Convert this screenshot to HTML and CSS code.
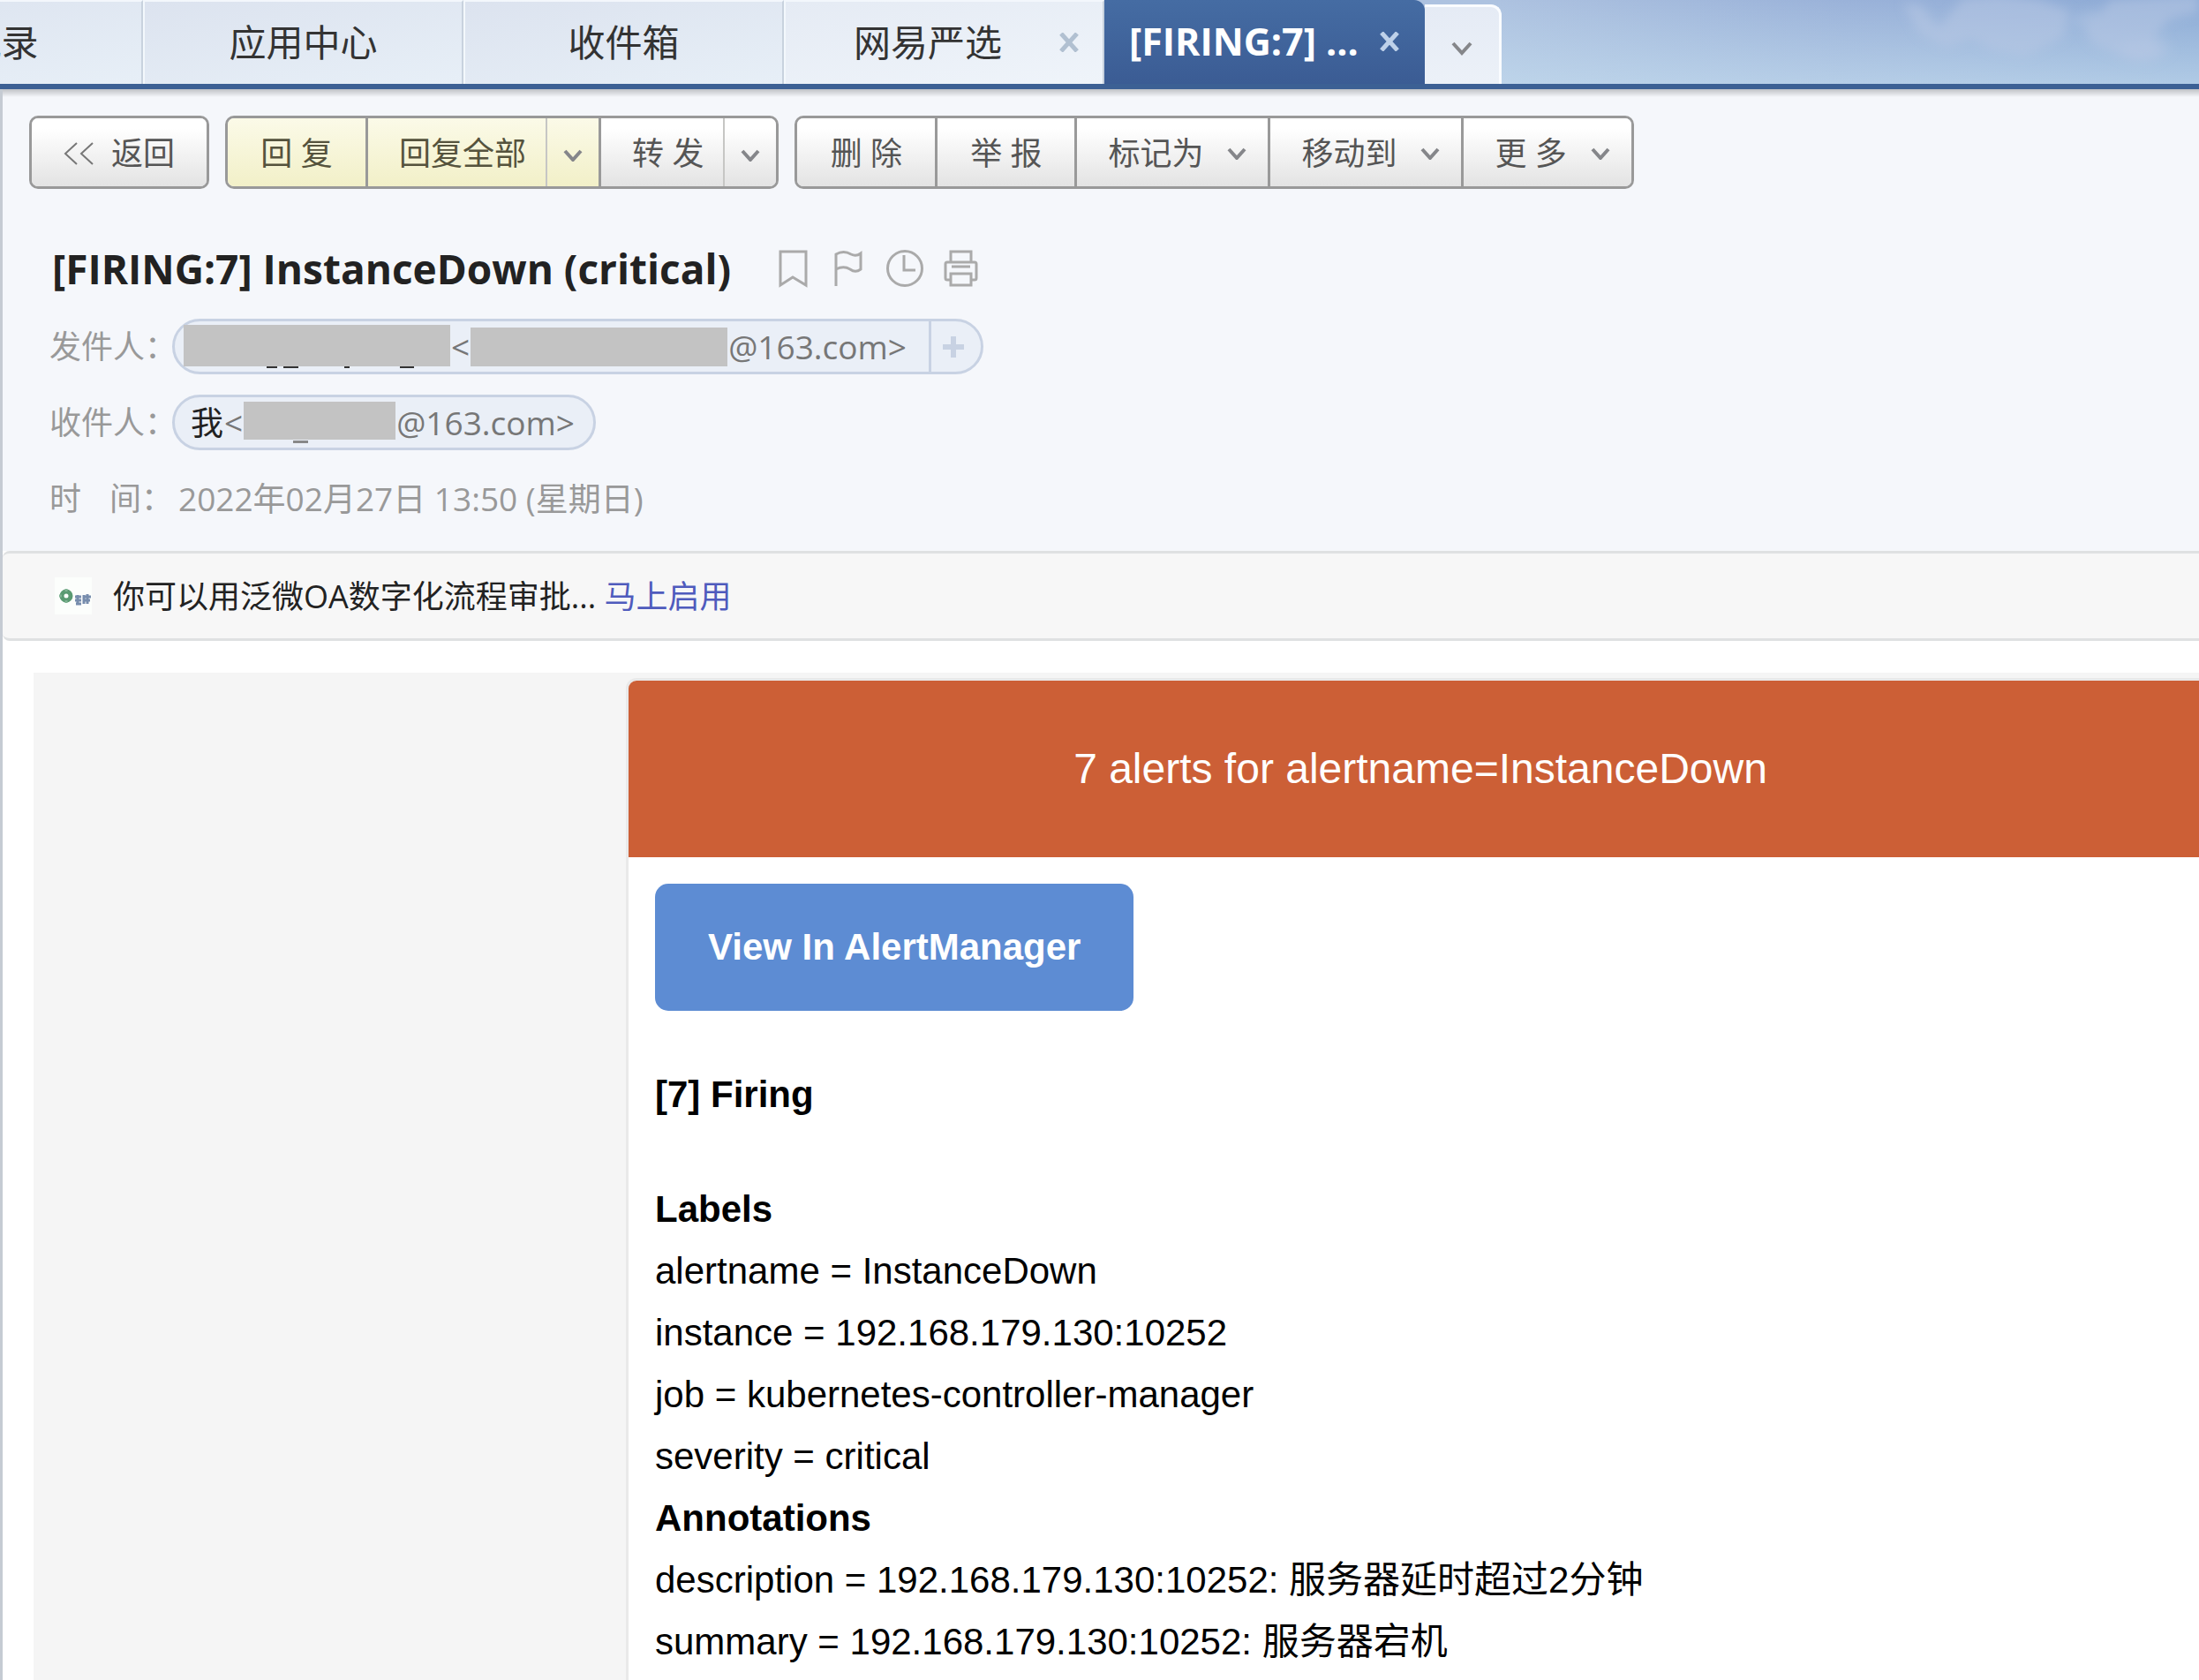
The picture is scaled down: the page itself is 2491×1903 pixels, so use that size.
FILE: index.html
```html
<!DOCTYPE html>
<html lang="zh-CN">
<head>
<meta charset="utf-8">
<title>[FIRING:7] InstanceDown (critical)</title>
<link rel="stylesheet" href="styles.css">
</head>
<body>
<header class="topbar">
  <svg class="sky" viewBox="0 0 560 95" aria-hidden="true">
    <defs><filter id="soft" x="-20%" y="-40%" width="140%" height="180%"><feGaussianBlur stdDeviation="6"/></filter></defs>
    <g filter="url(#soft)" fill="#b7c7e3">
      <path opacity=".55" d="M225 4l20 2 20 26 28-34 40-4 46 6 34 12-6 30-44 22-40-8-20-12-30 10-30-16z"/>
      <path opacity=".55" d="M430 34l30-34 100-8v22l-34 8-18 22 10 18-30 8-30-12-18-8z"/>
      <path opacity=".4" d="M420 18l26-8-6 20-24-2zM470 50l50-8 8 16-24 14-34-8z"/>
    </g>
  </svg>
  <nav class="tabs">
    <a class="tab" href="#"><span class="tab-label">通讯录</span></a>
    <a class="tab" href="#"><span class="tab-label">应用中心</span></a>
    <a class="tab" href="#"><span class="tab-label">收件箱</span></a>
    <div class="tab closable"><a class="tab-label" href="#">网易严选</a>
      <button class="close" aria-label="关闭"><svg width="22" height="22" viewBox="0 0 22 22"><path d="M2 1l18 20M20 1L2 21"/></svg></button></div>
    <div class="tab active"><a class="tab-label" href="#">[FIRING:7] ...</a>
      <button class="close" aria-label="关闭"><svg width="22" height="22" viewBox="0 0 22 22"><path d="M2 1l18 20M20 1L2 21"/></svg></button></div>
    <button class="tab-more" aria-label="更多标签"><svg class="chev" width="24" height="16" viewBox="0 0 24 16"><path d="M2 2l10 11L22 2"/></svg></button>
  </nav>
</header>

<main class="mail">
  <section class="mail-head">
    <div class="toolbar">
      <div class="group"><button class="btn back"><svg width="34" height="26" viewBox="0 0 34 26"><path d="M15 1L2 13l13 12M33 1L20 13l13 12"/></svg>返回</button></div>
      <div class="group">
        <button class="btn short yellow">回 复</button>
        <button class="btn split yellow">回复全部</button>
        <button class="btn arrow yellow" aria-label="回复全部选项"><svg class="chev" width="22" height="14" viewBox="0 0 22 14"><path d="M2 2l9 10 9-10"/></svg></button>
        <button class="btn split">转 发</button>
        <button class="btn arrow" aria-label="转发选项"><svg class="chev" width="22" height="14" viewBox="0 0 22 14"><path d="M2 2l9 10 9-10"/></svg></button>
      </div>
      <div class="group">
        <button class="btn short">删 除</button>
        <button class="btn short">举 报</button>
        <button class="btn menu">标记为<svg class="chev" width="22" height="14" viewBox="0 0 22 14"><path d="M2 2l9 10 9-10"/></svg></button>
        <button class="btn menu">移动到<svg class="chev" width="22" height="14" viewBox="0 0 22 14"><path d="M2 2l9 10 9-10"/></svg></button>
        <button class="btn menu">更 多<svg class="chev" width="22" height="14" viewBox="0 0 22 14"><path d="M2 2l9 10 9-10"/></svg></button>
      </div>
    </div>

    <div class="title-row">
      <h1>[FIRING:7] InstanceDown (critical)</h1>
      <div class="marks">
        <button aria-label="书签"><svg width="42" height="44" viewBox="0 0 42 44"><path d="M6 3h29v38L20 32 6 41z"/></svg></button>
        <button aria-label="旗标"><svg width="42" height="44" viewBox="0 0 42 44"><path d="M6 42V6c7-4 12-3 17 0 4 2 7 2 11-1v18c-4 3-8 3-12 0-5-3-10-3-16 0"/></svg></button>
        <button aria-label="稍后处理"><svg width="42" height="44" viewBox="0 0 42 44"><circle cx="21" cy="22" r="19.500"/><path d="M20 7v17h13"/></svg></button>
        <button aria-label="打印"><svg width="42" height="44" viewBox="0 0 42 44"><path d="M10 15V3h23v12M10 35H6q-2 0-2-2V17q0-2 2-2h31q2 0 2 2v16q0 2-2 2h-4M11 20h21M10 28h23v13H10z"/></svg></button>
      </div>
    </div>

    <div class="fields">
      <div class="field"><span class="label">发件人：</span>
        <span class="pill from">
          <svg class="mask" width="302" height="49" viewBox="0 0 302 49"><path d="M0 0h302v47H0z"/><path class="ink" d="M94 47h12v2H94zM113 47h17v2h-17zM182 47h6v2h-6zM245 47h16v2h-16z"/></svg>
          <span>&lt;</span>
          <svg class="mask" width="291" height="44" viewBox="0 0 291 44"><path d="M0 0h291v44H0z"/></svg>
          <span>@163.com&gt;</span>
          <button class="add" aria-label="添加联系人"><svg width="26" height="26" viewBox="0 0 26 26"><path d="M13 1v24M1 13h24"/></svg></button>
        </span>
      </div>
      <div class="field"><span class="label">收件人：</span>
        <span class="pill to"><span class="name">我</span><span>&lt;</span>
          <svg class="mask" width="172" height="47" viewBox="0 0 172 47"><path d="M0 0h172v43H0z"/><path class="under" d="M56 44h17v3H56z"/></svg>
          <span>@163.com&gt;</span></span>
      </div>
      <div class="field"><span class="label spread"><span>时</span><span>间：</span></span><span class="date">2022年02月27日 13:50 (星期日)</span></div>
    </div>
  </section>

  <aside class="notice">
    <svg width="42" height="42" viewBox="0 0 42 42" aria-hidden="true"><path fill="#fcfefc" d="M0 0h42v42H0z"/><circle cx="13" cy="21" r="5" fill="none" stroke="#5a9a72" stroke-width="5"/><path d="M13 13v3M13 26v3M5 21h3" stroke="#7fb292" stroke-width="3"/><path d="M23 22h7M23 26h7M24 30h6M26 20v10M33 20v10M32 22h9M34 26h6M37 19v11" stroke="#56719a" stroke-width="3" opacity=".8"/></svg>
    <p>你可以用泛微OA数字化流程审批... <a href="#">马上启用</a></p>
  </aside>

  <section class="mail-body">
    <article class="card">
      <h2>7 alerts for alertname=InstanceDown</h2>
      <div class="content">
        <a class="view" href="#">View In AlertManager</a>
        <p class="firing"><b>[7] Firing</b></p>
        <p><b>Labels</b><br>
          alertname = InstanceDown<br>
          instance = 192.168.179.130:10252<br>
          job = kubernetes-controller-manager<br>
          severity = critical<br>
          <b>Annotations</b><br>
          description = 192.168.179.130:10252: 服务器延时超过2分钟<br>
          summary = 192.168.179.130:10252: 服务器宕机</p>
      </div>
    </article>
  </section>
</main>
</body>
</html>
```
FILE: styles.css
```css
* { box-sizing: border-box; }
body {
  margin: 0;
  overflow: hidden;
  background: #fff;
  color: #222;
  font: 36px/48px "Open Sans", "Noto Sans CJK SC", sans-serif;
}
h1, h2, p { margin: 0; }
a { color: inherit; text-decoration: none; }
button {
  margin: 0;
  padding: 0;
  border: 0;
  background: none;
  color: inherit;
  font: inherit;
  cursor: pointer;
}
svg { display: block; flex: none; }

/* Top bar */
.topbar {
  position: relative;
  z-index: 1;
  overflow: hidden;
  border-bottom: 6px solid #3c6094;
  background:
    linear-gradient(to bottom, rgba(200, 224, 240, 0), rgba(200, 224, 240, .6)),
    linear-gradient(to right, #adc2e0 68%, #9ab2d9 84%, #8caad5);
}
.sky { position: absolute; top: 0; right: 0; width: 560px; height: 95px; }
.tabs { position: relative; display: flex; align-items: flex-end; height: 95px; margin-left: -201px; }
.tab {
  display: flex;
  align-items: center;
  flex: 0 0 363px;
  height: 95px;
  padding-bottom: 2px;
  border-top: 2px solid #f3f7fc;
  border-left: 2px solid #f3f8fc;
  border-right: 2px solid #c8d2de;
  background: linear-gradient(170deg, #dce3ef, #e7eff7);
  color: #333;
  font-size: 42px;
}
.tab-label { flex: 1; text-align: center; white-space: nowrap; }
.closable { padding-left: 16px; padding-right: 27px; background: linear-gradient(170deg, #e5ebf4, #eff4fa); }
.close { width: 22px; margin-left: 4px; }
.close svg { fill: none; stroke: #b1c0d1; stroke-width: 5; }
.active {
  padding: 0 29px 2px 28px;
  border: 0;
  border-radius: 0 12px 0 0;
  background: linear-gradient(#456ca3, #3b5c94);
  color: #fff;
  font-size: 43px;
  font-weight: 700;
}
.active .tab-label { text-align: left; }
.active .close { margin-left: 0; }
.active .close svg { stroke: #bed1e9; }
.tab-more {
  display: flex;
  align-items: center;
  justify-content: center;
  width: 87px;
  height: 90px;
  padding-top: 6px;
  border-top: 3px solid #fafcff;
  border-right: 3px solid #fafcff;
  border-radius: 0 12px 0 0;
  background: linear-gradient(#e5ebf5, #ecf1f8);
}
.chev { fill: none; stroke: #85868a; stroke-width: 4; }

/* Message head */
.mail { border-left: 3px solid #c5cbd3; }
.mail-head {
  padding: 30px 30px 28px;
  background: linear-gradient(#bfc1c5, #f5f7fb 9px);
}
.toolbar { display: flex; gap: 18px; }
.group {
  display: flex;
  height: 83px;
  border: 3px solid #999;
  border-radius: 10px;
  overflow: hidden;
}
.btn {
  display: flex;
  align-items: center;
  justify-content: center;
  padding-top: 2px;
  background: linear-gradient(#fff 15%, #e3e3e3);
  color: #555;
  white-space: nowrap;
}
.btn + .btn { border-left: 3px solid #999; }
.btn.yellow { background: linear-gradient(#fbfae8, #f2f0c8); color: #55533d; }
.back { gap: 20px; padding: 2px 36px 0; }
.back svg { fill: none; stroke: #777; stroke-width: 2; }
.short { width: 156px; }
.btn + .short { width: 158px; }
.split { padding: 2px 22px 0 35px; }
.btn + .arrow { width: 60px; padding-top: 6px; border-left: 2px solid #c6c6c4; }
.menu { gap: 27px; padding: 2px 24px 0 35px; }

.title-row { display: flex; align-items: center; gap: 50px; margin-top: 60px; padding-left: 26px; }
h1 { font-size: 46px; line-height: 60px; font-weight: 700; white-space: nowrap; }
.marks { display: flex; gap: 21px; }
.marks svg { fill: none; stroke: #aaa; stroke-width: 3; }

.fields { display: flex; flex-direction: column; gap: 23px; margin-top: 27px; padding-left: 23px; }
.field { display: flex; align-items: center; height: 63px; color: #999; white-space: nowrap; }
.label { width: 139px; }
.spread { display: flex; gap: 32px; }
.date { padding-left: 7px; font-size: 37px; }
.pill {
  display: flex;
  align-items: center;
  height: 63px;
  border: 3px solid #c8d2e3;
  border-radius: 32px;
  background: #eaeff7;
  color: #777;
  font-size: 37px;
}
.from { padding-left: 10px; gap: 1px; }
.to { padding: 0 21px 0 18px; gap: 1px; }
.name { color: #222; }
.mask { fill: #c3c3c3; }
.ink { fill: #333; }
.under { fill: #888; }
.add {
  display: flex;
  align-items: center;
  height: 57px;
  margin-left: 24px;
  padding: 0 18px 0 12px;
  border-left: 3px solid #c8d2e3;
}
.add svg { fill: none; stroke: #c8d2e3; stroke-width: 6; }

/* Notice strip */
.notice {
  display: flex;
  align-items: center;
  gap: 24px;
  height: 102px;
  padding-left: 59px;
  border: solid #dfe1e2;
  border-width: 3px 0;
  border-radius: 8px 0 0 8px;
  background: #f7f7f7;
  white-space: nowrap;
}
.notice p { padding-top: 2px; }
.notice a { color: #4f5bbd; }

/* Message body */
.mail-body {
  display: flex;
  margin: 36px 0 0 35px;
  padding: 6px 0 60px 671px;
  background: #f5f5f5;
  color: #000;
  font-family: "Liberation Sans", "Noto Sans CJK SC", sans-serif;
}
.card {
  flex: 0 0 1800px;
  border: 3px solid #e9e9e9;
  border-radius: 12px;
  overflow: hidden;
  background: #fff;
}
h2 {
  padding: 60px;
  background: #cc5f36;
  color: #fff;
  font-size: 48px;
  line-height: 80px;
  font-weight: 400;
  text-align: center;
}
.content { padding: 30px; font-size: 42px; line-height: 70px; }
.view {
  display: inline-block;
  padding: 37px 60px;
  border-radius: 15px;
  background: #5d8cd3;
  color: #fff;
  font-weight: 700;
  vertical-align: top;
}
.firing { margin: 60px 0; }
```
